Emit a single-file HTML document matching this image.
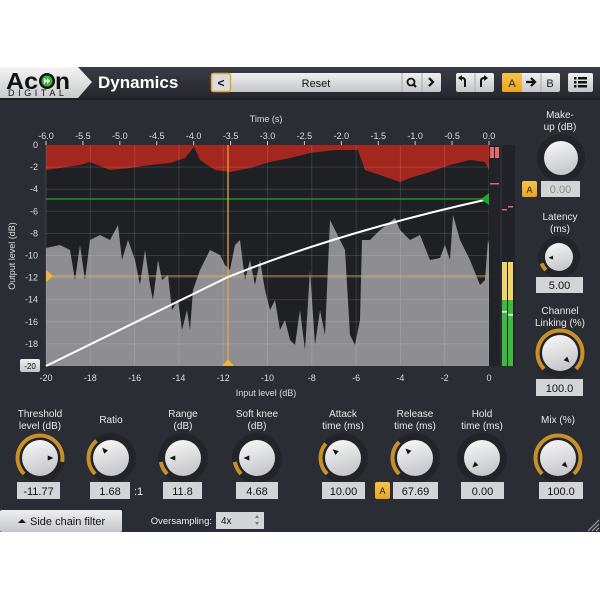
<!DOCTYPE html>
<html><head><meta charset="utf-8"><style>
body{margin:0;width:600px;height:600px;background:#fff;overflow:hidden;font-family:"Liberation Sans",sans-serif}
svg{position:absolute;left:0;top:0}
</style></head><body>
<svg id="s" width="600" height="600" viewBox="0 0 600 600" font-family="Liberation Sans, sans-serif">
<defs>
<linearGradient id="kg" x1="0" y1="0" x2="0.3" y2="1"><stop offset="0" stop-color="#fafafa"/><stop offset="1" stop-color="#c8c9cd"/></linearGradient>
<linearGradient id="bg" x1="0" y1="0" x2="0" y2="1"><stop offset="0" stop-color="#f0f0f2"/><stop offset="1" stop-color="#c4c5c9"/></linearGradient>
<linearGradient id="hd" x1="0" y1="0" x2="0" y2="1"><stop offset="0" stop-color="#3a3c44"/><stop offset="1" stop-color="#26272d"/></linearGradient>
<linearGradient id="lg" x1="0" y1="0" x2="0" y2="1"><stop offset="0" stop-color="#f4f4f4"/><stop offset="1" stop-color="#c9cacc"/></linearGradient>
<linearGradient id="og" x1="0" y1="0" x2="0" y2="1"><stop offset="0" stop-color="#f7c34a"/><stop offset="1" stop-color="#e9a623"/></linearGradient>
</defs>
<rect x="0" y="67" width="600" height="465" fill="#2b2d34"/>
<rect x="0" y="67" width="600" height="31" fill="url(#hd)"/>
<rect x="0" y="98" width="600" height="2" fill="#1e1f24"/>
<polygon points="0,67 78,67 92,82 78,98 0,98" fill="url(#lg)"/>
<text x="6" y="89" font-size="23" font-weight="bold" fill="#111" textLength="32" lengthAdjust="spacingAndGlyphs">Ac</text>
<circle cx="47" cy="81" r="8" fill="#111"/><circle cx="47" cy="81" r="5.5" fill="#3fb33c"/>
<polygon points="44,78 47,81 44,84" fill="#fff"/><polygon points="47,78 50,81 47,84" fill="#fff"/>
<text x="55" y="89" font-size="23" font-weight="bold" fill="#111" textLength="15" lengthAdjust="spacingAndGlyphs">n</text>
<text x="8" y="96" font-size="9" fill="#111" letter-spacing="3.6">DIGITAL</text>
<text x="98" y="88" font-size="17" font-weight="bold" fill="#fff">Dynamics</text>
<rect x="211" y="73" width="230" height="19" rx="2" fill="url(#bg)"/>
<rect x="211.5" y="73.5" width="19" height="18" rx="2" fill="#dcdcdf" stroke="#e0a63a" stroke-width="1.5"/>
<text x="221" y="87" font-size="12" font-weight="bold" text-anchor="middle" fill="#111">&lt;</text>
<text x="316" y="87" font-size="11" text-anchor="middle" fill="#111">Reset</text>
<line x1="402" y1="73" x2="402" y2="92" stroke="#aaa"/><line x1="422" y1="73" x2="422" y2="92" stroke="#aaa"/>
<circle cx="411" cy="82" r="3.5" fill="none" stroke="#111" stroke-width="1.8"/><line x1="413.5" y1="84.5" x2="416" y2="87" stroke="#111" stroke-width="2"/>
<path d="M429 78 L433 82 L429 86" fill="none" stroke="#111" stroke-width="2.2"/>
<rect x="456" y="73" width="38" height="19" rx="2" fill="url(#bg)"/><line x1="475" y1="73" x2="475" y2="92" stroke="#aaa"/>
<path d="M465 87 V81 Q465 78 462 78 H459" fill="none" stroke="#111" stroke-width="2"/><polygon points="458,78 462,75 462,81" fill="#111"/>
<path d="M481 87 V81 Q481 78 484 78 H487" fill="none" stroke="#111" stroke-width="2"/><polygon points="488,78 484,75 484,81" fill="#111"/>
<rect x="502" y="73" width="58" height="19" rx="2" fill="url(#bg)"/>
<rect x="502" y="73" width="20" height="19" rx="2" fill="url(#og)"/>
<text x="512" y="87" font-size="11" text-anchor="middle" fill="#222">A</text>
<path d="M526 82 H535 M531 78 L535 82 L531 86" fill="none" stroke="#111" stroke-width="2.2"/>
<line x1="541" y1="73" x2="541" y2="92" stroke="#aaa"/>
<text x="550" y="87" font-size="11" text-anchor="middle" fill="#222">B</text>
<rect x="568" y="73" width="25" height="19" rx="2" fill="url(#bg)"/>
<g fill="#111"><rect x="574" y="77" width="2.5" height="2.5"/><rect x="578" y="77" width="9" height="2.5"/><rect x="574" y="81" width="2.5" height="2.5"/><rect x="578" y="81" width="9" height="2.5"/><rect x="574" y="85" width="2.5" height="2.5"/><rect x="578" y="85" width="9" height="2.5"/></g>
<text x="266" y="122" font-size="9" fill="#ddd" text-anchor="middle">Time (s)</text>
<g id="ticks" font-size="9" fill="#ddd" text-anchor="middle"></g>
<text x="266" y="396" font-size="9" fill="#ddd" text-anchor="middle">Input level (dB)</text>
<text transform="translate(15,256) rotate(-90)" font-size="9" fill="#ddd" text-anchor="middle">Output level (dB)</text>
<rect x="46" y="145" width="443" height="221" fill="#8e8e92"/>
<polygon fill="#1f2024" points="46,145 489,145 489,245 488,240 485,280 480,285 470,260 460,240 453,215 450,260 445,245 440,258 430,260 420,235 410,240 400,230 395,218 390,222 380,230 370,240 362,240 360,320 355,345 350,335 345,250 340,240 330,220 325,335 320,310 315,345 310,270 305,350 300,310 295,345 290,340 285,320 280,330 275,300 270,310 265,290 260,260 255,285 250,260 245,280 240,240 235,245 230,270 225,265 220,255 210,250 200,270 193,290 190,330 187,310 182,330 178,300 172,310 168,275 162,280 158,260 153,300 150,285 145,250 140,285 135,260 128,240 122,260 118,225 110,240 100,235 90,240 85,280 80,245 75,280 70,250 60,245 46,248"/>
<polygon fill="#a3271f" points="46,145 489,145 489,170 485,162 470,160 450,165 430,172 410,178 400,182 380,175 365,170 358,150 335,150 310,153 290,158 270,162 250,168 230,172 215,170 200,160 194,147 185,158 170,163 150,165 130,168 110,170 90,162 80,165 60,168 46,170"/>
<g id="grid" stroke="#ffffff" stroke-opacity="0.12" stroke-width="1"></g>
<line x1="46" y1="199" x2="489" y2="199" stroke="#1fa82a" stroke-width="1.2"/>
<line x1="46" y1="276" x2="489" y2="276" stroke="#e0b04a" stroke-opacity="0.7" stroke-width="1.2"/>
<line x1="228" y1="145" x2="228" y2="366" stroke="#e3a73b" stroke-width="1.3"/>
<path d="M46 366 L228 277 Q340 232 489 199" fill="none" stroke="#fff" stroke-width="2"/>
<polygon points="489,193 481,199 489,205" fill="#1fa82a"/>
<polygon points="46,270 53,276 46,282" fill="#f0b43a"/>
<polygon points="222,366 228,359 234,366" fill="#f0b43a"/>
<rect x="20" y="359" width="20" height="13" rx="2" fill="url(#bg)"/>
<text x="30" y="369" font-size="8" text-anchor="middle" fill="#111">-20</text>
<rect x="489" y="145" width="11" height="221" fill="#222328"/>
<rect x="502" y="145" width="13" height="221" fill="#222328"/>
<rect x="490" y="147" width="4" height="11" fill="#e36a6a"/><rect x="495" y="147" width="4" height="11" fill="#e36a6a"/>
<rect x="490" y="183" width="9" height="1.5" fill="#e36a6a"/>
<rect x="502" y="209" width="5" height="1.5" fill="#e36a6a"/><rect x="508" y="206" width="5" height="1.5" fill="#e36a6a"/>
<rect x="502" y="262" width="5" height="38" fill="#f0d56a"/><rect x="508" y="262" width="5" height="38" fill="#f0d56a"/>
<rect x="502" y="300" width="5" height="66" fill="#3dbb3d"/><rect x="508" y="300" width="5" height="66" fill="#3dbb3d"/>
<rect x="502" y="311" width="5" height="1.5" fill="#fff"/><rect x="508" y="314" width="5" height="1.5" fill="#fff"/>
<g font-size="10" fill="#e8e8e8" text-anchor="middle">
<text x="560" y="118">Make-</text><text x="560" y="130">up (dB)</text>
<text x="560" y="220">Latency</text><text x="560" y="232">(ms)</text>
<text x="560" y="314">Channel</text><text x="560" y="326">Linking (%)</text>
<text x="40" y="417">Threshold</text><text x="40" y="429">level (dB)</text>
<text x="111" y="423">Ratio</text>
<text x="183" y="417">Range</text><text x="183" y="429">(dB)</text>
<text x="257" y="417">Soft knee</text><text x="257" y="429">(dB)</text>
<text x="343" y="417">Attack</text><text x="343" y="429">time (ms)</text>
<text x="415" y="417">Release</text><text x="415" y="429">time (ms)</text>
<text x="482" y="417">Hold</text><text x="482" y="429">time (ms)</text>
<text x="558" y="423">Mix (%)</text>
</g>
<g id="knobs"></g>
<g id="boxes" font-size="11" text-anchor="middle"></g>
<text x="134" y="495" font-size="11" fill="#eee">:1</text>
<rect x="522" y="181" width="15" height="16" rx="2" fill="url(#og)"/><text x="529.5" y="193" font-size="9" text-anchor="middle" fill="#222">A</text>
<rect x="375" y="482" width="15" height="17" rx="2" fill="url(#og)"/><text x="382.5" y="494" font-size="9" text-anchor="middle" fill="#222">A</text>
<rect x="0" y="510" width="122" height="22" rx="2" fill="url(#bg)"/>
<polygon points="18,523 22,519 26,523" fill="#111"/>
<text x="30" y="525" font-size="11" fill="#111">Side chain filter</text>
<text x="212" y="524" font-size="9.5" fill="#eee" text-anchor="end">Oversampling:</text>
<rect x="216" y="512" width="48" height="17" fill="#d4d5d9"/>
<text x="221" y="524" font-size="10" fill="#111">4x</text>
<polygon points="255,518 257,515 259,518" fill="#777"/><polygon points="255,522 257,525 259,522" fill="#777"/>
<g stroke="#aaa" stroke-width="1"><line x1="588" y1="531" x2="599" y2="520"/><line x1="592" y1="531" x2="599" y2="524"/><line x1="596" y1="531" x2="599" y2="528"/></g>
</svg>
<script>
var NS="http://www.w3.org/2000/svg";
function el(p,t,a,txt){var e=document.createElementNS(NS,t);for(var k in a)e.setAttribute(k,a[k]);if(txt!=null)e.textContent=txt;p.appendChild(e);return e;}
var tk=document.getElementById('ticks'),gr=document.getElementById('grid');
for(var i=0;i<=12;i++){var x=46+i*443/12;var v=(-6+i*0.5).toFixed(1);el(tk,'text',{x:x,y:139},v);el(tk,'line',{x1:x,y1:141,x2:x,y2:145,stroke:'#ccc'});}
for(var i=0;i<=10;i++){var x=46+i*44.3;el(tk,'text',{x:x,y:381},String(-20+2*i));el(gr,'line',{x1:x,y1:145,x2:x,y2:366});
 var y=145+i*22.1;if(i<10)el(tk,'text',{x:38,y:y+3,'text-anchor':'end'},String(-2*i));if(i>0&&i<10)el(gr,'line',{x1:46,y1:y,x2:489,y2:y});}
var kg=document.getElementById('knobs');
function pt(cx,cy,r,a){a=a*Math.PI/180;return [cx+r*Math.sin(a),cy-r*Math.cos(a)];}
function knob(cx,cy,r,a0,a1,p){
 el(kg,'circle',{cx:cx,cy:cy,r:r+7,fill:'#23242a'});
 if(a1!=null&&a1>a0){var R=r+4.5,s=pt(cx,cy,R,a0),e=pt(cx,cy,R,a1);
  el(kg,'path',{d:'M'+s[0]+' '+s[1]+' A'+R+' '+R+' 0 '+((a1-a0)>180?1:0)+' 1 '+e[0]+' '+e[1],fill:'none',stroke:'#c8902a','stroke-width':4});}
 el(kg,'circle',{cx:cx,cy:cy,r:r,fill:'url(#kg)'});
 if(p!=null){var tip=pt(cx,cy,r*0.75,p);var l=pt(cx,cy,r*0.45,p-18),m=pt(cx,cy,r*0.45,p+18);
  el(kg,'polygon',{points:tip.join(',')+' '+l.join(',')+' '+m.join(','),fill:'#111'});}
}
knob(561,158,17,0,null,null);
knob(559,257,14,-135,-110,-95);
knob(560,353,18,-135,135,135);
knob(40,458,18,-135,100,90);
knob(111,458,18,-135,-40,-40);
knob(183,458,18,-135,-100,-90);
knob(257,458,18,-135,-100,-90);
knob(343,458,18,-135,-50,-50);
knob(415,458,18,-135,-45,-45);
knob(482,458,18,0,null,-135);
knob(558,458,18,-135,135,135);
var bx=document.getElementById('boxes');
function box(x,w,y,h,t,c){el(bx,'rect',{x:x,y:y,width:w,height:h,fill:'#d3d4d8'});el(bx,'text',{x:x+w/2,y:y+h-4,fill:c||'#111'},t);}
box(541,39,181,16,'0.00','#888');
box(536,47,277,16,'5.00');
box(536,47,379,17,'100.0');
box(17,43,482,17,'-11.77');
box(90,40,482,17,'1.68');
box(163,39,482,17,'11.8');
box(236,42,482,17,'4.68');
box(322,43,482,17,'10.00');
box(393,45,482,17,'67.69');
box(461,43,482,17,'0.00');
box(539,44,482,17,'100.0');
</script>
</body></html>
